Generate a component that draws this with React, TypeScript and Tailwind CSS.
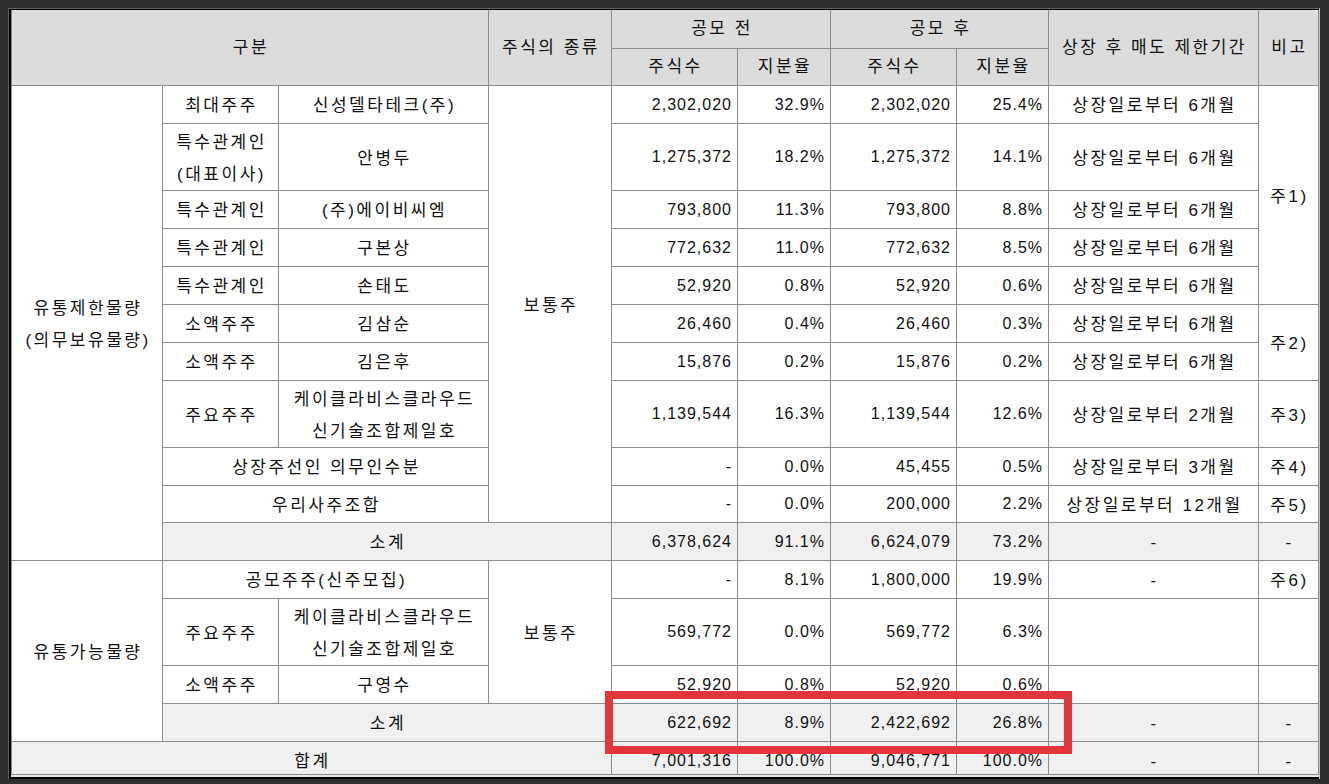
import React from "react";

const W = "bg-white";
const H = "bg-[#dcdcdc]";
const S = "bg-[#f0f0f0]";

function C({ c = "", children }: { c?: string; children?: React.ReactNode }) {
  const isHead = c.indexOf("dcdcdc") >= 0;
  return (
    <div className={"flex items-center justify-center text-center text-[17px] leading-[32px] tracking-[2.5px] " + (isHead ? "" : "pt-[3px] ") + c}>
      <div className="pl-[2px]">{children}</div>
    </div>
  );
}

function N({ c = "", children }: { c?: string; children?: React.ReactNode }) {
  return (
    <div className={"flex items-center justify-end pr-[5px] tracking-[1px] " + c}>{children}</div>
  );
}

export default function App() {
  const p = "상장일로부터 6개월";
  return (
    <div className="relative w-[1329px] h-[784px] bg-[#2d2d2d] pt-[8px] pl-[8px] overflow-hidden font-['Liberation_Sans','Noto_Sans_CJK_KR',sans-serif] text-[16px] text-[#111]">
      <div className="w-[1312px] border-t border-l border-r border-t-[#5f5f5f] border-l-[#5f5f5f] border-r-[#c4c4c4]">
        <div className="w-[1310px] border-l-2 border-t border-b-2 border-black">
          <div className="w-[1308px] h-[765px] border-l border-r border-b border-[#8c8c8c] overflow-hidden">
            <div className="grid grid-cols-[150px_115px_209px_122px_125px_92px_125px_91px_209px_59px] grid-rows-[38px_36px_37px_66px_37px_37px_37px_37px_37px_66px_37px_36px_37px_37px_66px_37px_37px_37px] gap-px bg-[#8c8c8c]">
              {/* header */}
              <C c={"col-span-3 row-span-2 " + H}>구분</C>
              <C c={"row-span-2 " + H}>주식의 종류</C>
              <C c={"col-span-2 " + H}>공모 전</C>
              <C c={"col-span-2 " + H}>공모 후</C>
              <C c={"row-span-2 " + H}>상장 후 매도 제한기간</C>
              <C c={"row-span-2 " + H}>비고</C>
              <C c={H}>주식수</C>
              <C c={H}>지분율</C>
              <C c={H}>주식수</C>
              <C c={H}>지분율</C>

              {/* row 1 */}
              <C c={"row-span-11 " + W}>
                유통제한물량
                <br />
                (의무보유물량)
              </C>
              <C c={W}>최대주주</C>
              <C c={W}>신성델타테크(주)</C>
              <C c={"row-span-10 " + W}>보통주</C>
              <N c={W}>2,302,020</N>
              <N c={W}>32.9%</N>
              <N c={W}>2,302,020</N>
              <N c={W}>25.4%</N>
              <C c={W}>{p}</C>
              <C c={"row-span-5 " + W}>주1)</C>

              {/* row 2 */}
              <C c={W}>
                특수관계인
                <br />
                (대표이사)
              </C>
              <C c={W}>안병두</C>
              <N c={W}>1,275,372</N>
              <N c={W}>18.2%</N>
              <N c={W}>1,275,372</N>
              <N c={W}>14.1%</N>
              <C c={W}>{p}</C>

              {/* row 3 */}
              <C c={W}>특수관계인</C>
              <C c={W}>(주)에이비씨엠</C>
              <N c={W}>793,800</N>
              <N c={W}>11.3%</N>
              <N c={W}>793,800</N>
              <N c={W}>8.8%</N>
              <C c={W}>{p}</C>

              {/* row 4 */}
              <C c={W}>특수관계인</C>
              <C c={W}>구본상</C>
              <N c={W}>772,632</N>
              <N c={W}>11.0%</N>
              <N c={W}>772,632</N>
              <N c={W}>8.5%</N>
              <C c={W}>{p}</C>

              {/* row 5 */}
              <C c={W}>특수관계인</C>
              <C c={W}>손태도</C>
              <N c={W}>52,920</N>
              <N c={W}>0.8%</N>
              <N c={W}>52,920</N>
              <N c={W}>0.6%</N>
              <C c={W}>{p}</C>

              {/* row 6 */}
              <C c={W}>소액주주</C>
              <C c={W}>김삼순</C>
              <N c={W}>26,460</N>
              <N c={W}>0.4%</N>
              <N c={W}>26,460</N>
              <N c={W}>0.3%</N>
              <C c={W}>{p}</C>
              <C c={"row-span-2 " + W}>주2)</C>

              {/* row 7 */}
              <C c={W}>소액주주</C>
              <C c={W}>김은후</C>
              <N c={W}>15,876</N>
              <N c={W}>0.2%</N>
              <N c={W}>15,876</N>
              <N c={W}>0.2%</N>
              <C c={W}>{p}</C>

              {/* row 8 */}
              <C c={W}>주요주주</C>
              <C c={W}>
                케이클라비스클라우드
                <br />
                신기술조합제일호
              </C>
              <N c={W}>1,139,544</N>
              <N c={W}>16.3%</N>
              <N c={W}>1,139,544</N>
              <N c={W}>12.6%</N>
              <C c={W}>상장일로부터 2개월</C>
              <C c={W}>주3)</C>

              {/* row 9 */}
              <C c={"col-span-2 " + W}>상장주선인 의무인수분</C>
              <N c={W}>-</N>
              <N c={W}>0.0%</N>
              <N c={W}>45,455</N>
              <N c={W}>0.5%</N>
              <C c={W}>상장일로부터 3개월</C>
              <C c={W}>주4)</C>

              {/* row 10 */}
              <C c={"col-span-2 " + W}>우리사주조합</C>
              <N c={W}>-</N>
              <N c={W}>0.0%</N>
              <N c={W}>200,000</N>
              <N c={W}>2.2%</N>
              <C c={W}>상장일로부터 12개월</C>
              <C c={W}>주5)</C>

              {/* subtotal 1 */}
              <C c={"col-span-3 " + S}>소계</C>
              <N c={S}>6,378,624</N>
              <N c={S}>91.1%</N>
              <N c={S}>6,624,079</N>
              <N c={S}>73.2%</N>
              <C c={S}>-</C>
              <C c={S}>-</C>

              {/* group 2 */}
              <C c={"row-span-4 " + W}>유통가능물량</C>
              <C c={"col-span-2 " + W}>공모주주(신주모집)</C>
              <C c={"row-span-3 " + W}>보통주</C>
              <N c={W}>-</N>
              <N c={W}>8.1%</N>
              <N c={W}>1,800,000</N>
              <N c={W}>19.9%</N>
              <C c={W}>-</C>
              <C c={W}>주6)</C>

              <C c={W}>주요주주</C>
              <C c={W}>
                케이클라비스클라우드
                <br />
                신기술조합제일호
              </C>
              <N c={W}>569,772</N>
              <N c={W}>0.0%</N>
              <N c={W}>569,772</N>
              <N c={W}>6.3%</N>
              <C c={W}></C>
              <C c={W}></C>

              <C c={W}>소액주주</C>
              <C c={W}>구영수</C>
              <N c={W}>52,920</N>
              <N c={W}>0.8%</N>
              <N c={W}>52,920</N>
              <N c={W}>0.6%</N>
              <C c={W}></C>
              <C c={W}></C>

              <C c={"col-span-3 " + S}>소계</C>
              <N c={S}>622,692</N>
              <N c={S}>8.9%</N>
              <N c={S}>2,422,692</N>
              <N c={S}>26.8%</N>
              <C c={S}>-</C>
              <C c={S}>-</C>

              {/* total */}
              <C c={"col-span-4 " + S}>합계</C>
              <N c={S}>7,001,316</N>
              <N c={S}>100.0%</N>
              <N c={S}>9,046,771</N>
              <N c={S}>100.0%</N>
              <C c={S}>-</C>
              <C c={S}>-</C>
            </div>
          </div>
          <div className="h-[2px] bg-[#e6e6e6]"></div>
        </div>
      </div>
      <div className="absolute left-[605px] top-[691px] w-[467px] h-[63px] border-[8px] border-[#e3363c]"></div>
    </div>
  );
}
